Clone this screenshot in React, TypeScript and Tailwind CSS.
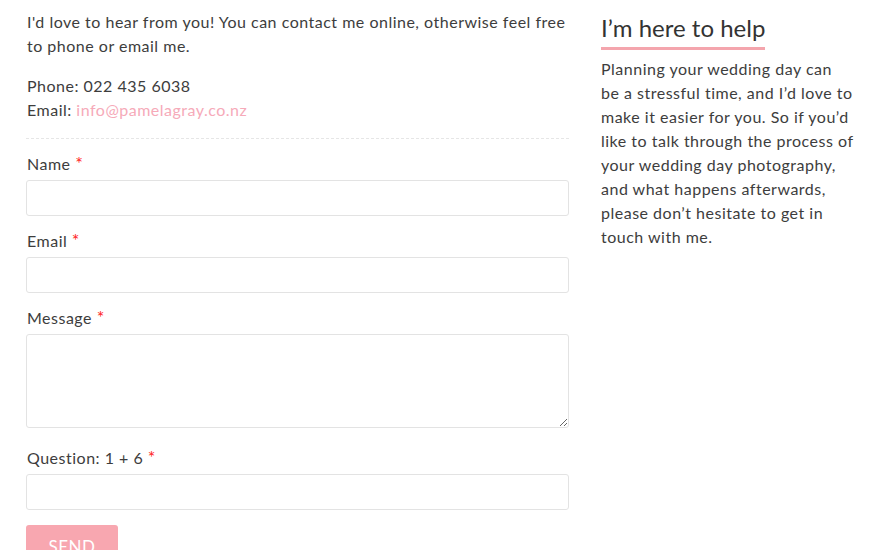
import React from "react";

const fields = [
  { label: "Name", type: "input" },
  { label: "Email", type: "input" },
  { label: "Message", type: "textarea" },
];

const Req = () => <span className="text-[#ff1f1f] text-[18px] leading-[10px]">*</span>;

export default function App() {
  return (
    <div className="w-[880px] h-[550px] overflow-hidden bg-white font-['Lato',sans-serif] text-[16px] leading-[24px] tracking-[0.5px] text-[#3d3d3d]">
      <div className="flex gap-8 pl-[26px] pr-[24px] pt-[10px]">
        {/* contact form column */}
        <div className="w-[543px] shrink-0">
          <p className="pl-[1px]">
            I'd love to hear from you! You can contact me online, otherwise feel free to phone or email me.
          </p>
          <p className="mt-[16px] pl-[1px]">
            Phone: 022 435 6038
            <br />
            Email: <a className="text-[#f6aab9]">info@pamelagray.co.nz</a>
          </p>
          <div className="mt-[16px] border-t border-dashed border-[#e6e6e6]" />

          <form className="mt-[13px]">
            {fields.map((f) => (
              <div key={f.label} className="mb-[13px]">
                <label className="block h-[24px] pl-[1px] mb-[4px]">
                  {f.label} <Req />
                </label>
                {f.type === "input" ? (
                  <input className="block w-full h-[36px] border border-[#e3e3e3] rounded-[3px] bg-white" />
                ) : (
                  <textarea className="block w-full h-[94px] border border-[#e3e3e3] rounded-[3px] bg-white" />
                )}
              </div>
            ))}
            <label className="block h-[24px] pl-[1px] mt-[18px] mb-[4px]">
              Question: 1 + 6 <Req />
            </label>
            <input className="block w-full h-[36px] border border-[#e3e3e3] rounded-[3px] bg-white" />
            <button
              type="button"
              className="mt-[15px] w-[92px] h-[40px] rounded-[3px] bg-[#f8a7b0] text-white text-[17px] pt-[4px] leading-[24px]"
            >
              SEND
            </button>
          </form>
        </div>

        {/* sidebar */}
        <div className="w-[253.5px]">
          <h3 className="inline-block text-[24px] leading-[34px] tracking-normal text-[#333] border-b-[3px] border-[#f4a5ad] pb-[2px] mt-[1px]">
            I’m here to help
          </h3>
          <p className="mt-[7px]">
            Planning your wedding day can be a stressful time, and I’d love to make it easier for you. So if you’d like to talk through the process of your wedding day photography, and what happens afterwards, please don’t hesitate to get in touch with me.
          </p>
        </div>
      </div>
    </div>
  );
}
